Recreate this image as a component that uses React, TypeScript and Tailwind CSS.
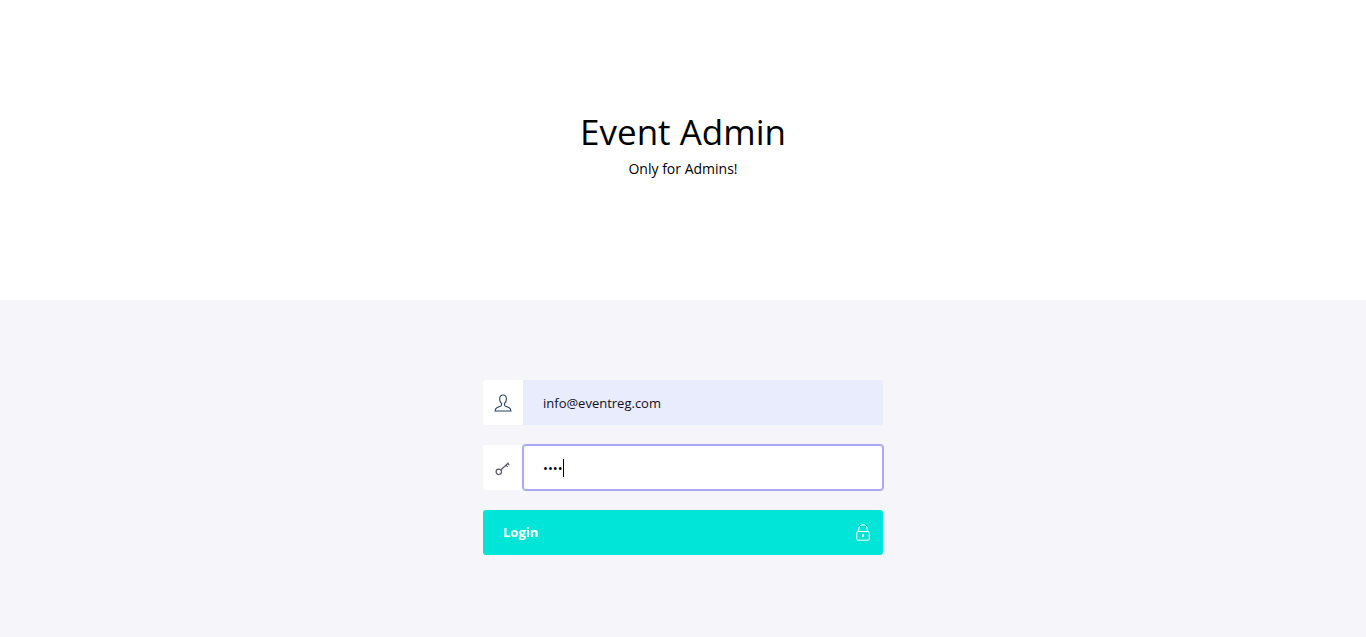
import { useState } from 'react';

function UserIcon() {
  return (
    <svg width="18" height="18" viewBox="0 0 18 18" fill="none" stroke="#2a4566" strokeWidth="1.100">
      <path d="M9 1C6.800 1 5.600 2.600 5.600 5c0 2 .9 3.600 1.900 4.400v1.500c0 .7-.5 1.100-1.200 1.400l-3.100 1.300C2 14.200 1.200 15.300 1 17h16c-.2-1.700-1-2.800-2.200-3.400l-3.100-1.300c-.7-.3-1.200-.7-1.200-1.400V9.400c1-.8 1.900-2.400 1.900-4.400C12.400 2.600 11.200 1 9 1z" />
    </svg>
  );
}

function KeyIcon() {
  return (
    <svg width="16" height="16" viewBox="0 0 16 16" fill="none" stroke="#55556e" strokeWidth="1.200">
      <circle cx="3.800" cy="11.800" r="2.700" />
      <path d="M5.800 10 13.600 2.800M11 5.200l1.600 1.600M12.800 3.600l1.600 1.600" />
    </svg>
  );
}

function LockIcon() {
  return (
    <svg width="14" height="17" viewBox="0 0 14 17" fill="none" stroke="#ffffff" strokeWidth="1">
      <path d="M2.800 7.500V4.800C2.800 2.400 4.600 .8 7 .8s4.200 1.600 4.200 4V7.500" />
      <rect x=".8" y="7.500" width="12.400" height="8.700" rx=".8" />
      <path d="M7 10.200v2.800" strokeWidth="1.800" />
    </svg>
  );
}

export default function App() {
  const [email, setEmail] = useState('info@eventreg.com');
  const [password, setPassword] = useState('1234');

  return (
    <div className="min-h-[637px] bg-[#f5f5fa] font-['Open_Sans',sans-serif] text-black">
      <header className="h-[300px] bg-white flex flex-col items-center pt-[108px]">
        <h1 className="text-[35px] leading-[48px]">Event Admin</h1>
        <p className="mt-px text-sm leading-[24px]">Only for Admins!</p>
      </header>

      <form className="w-[400px] mx-auto pt-[80px] flex flex-col gap-5" onSubmit={(e) => e.preventDefault()}>
        <div className="flex h-[45px]">
          <span className="w-10 shrink-0 bg-white rounded-l-[3px] flex items-center justify-center">
            <UserIcon />
          </span>
          <input
            type="email"
            value={email}
            onChange={(e) => setEmail(e.target.value)}
            className="flex-1 min-w-0 bg-[#e9ecfd] rounded-r-[3px] px-5 pt-0.5 text-[13px] text-[#0f0f23] outline-none"
          />
        </div>

        <div className="flex h-[45px]">
          <span className="w-10 shrink-0 bg-white rounded-l-[3px] flex items-center justify-center">
            <KeyIcon />
          </span>
          <div className="relative flex-1 min-w-0 flex">
            <input
              autoFocus
              type="password"
              value={password}
              onChange={(e) => setPassword(e.target.value)}
              className="w-full bg-white rounded-[3px] px-5 pt-0.5 text-[13px] text-black outline-none shadow-[0_0_0_1px_#a9a9f5,inset_0_0_0_1px_#a9a9f5]"
            />
            {/* caret doesn't show up in a still, so it's drawn */}
            <span className="absolute left-[40px] top-[14px] w-px h-[18px] bg-black" />
          </div>
        </div>

        <button className="h-[45px] bg-[#00e5d8] rounded-[3px] pl-5 pr-[13px] flex items-center justify-between text-white text-[13px] font-bold">
          Login
          <LockIcon />
        </button>
      </form>
    </div>
  );
}
